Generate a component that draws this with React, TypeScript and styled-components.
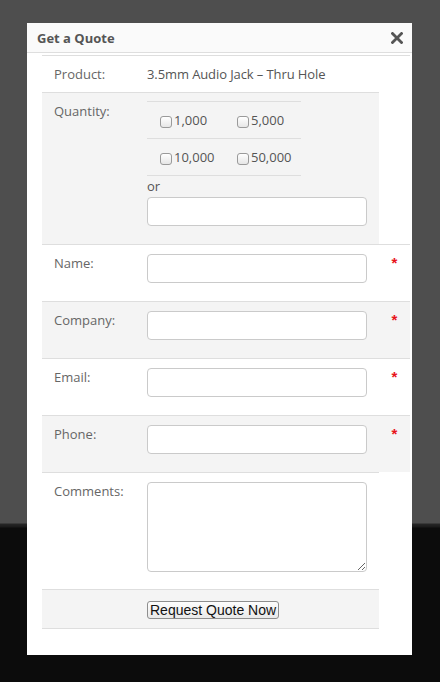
import React from "react";
import styled, { createGlobalStyle } from "styled-components";

const Global = createGlobalStyle`
  html, body { margin: 0; padding: 0; }
  body { font-family: "Open Sans", "Noto Sans", sans-serif; }
`;

const Backdrop = styled.div`
  width: 440px;
  height: 682px;
  overflow: hidden;
  background: linear-gradient(
    to bottom,
    #4e4e4e 0px,
    #4e4e4e 523px,
    #262626 524px,
    #1a1a1a 527px,
    #0c0c0c 528px,
    #0c0c0c 100%
  );
  padding-top: 23px;
  box-sizing: border-box;
`;

const Modal = styled.div`
  margin-left: 27px;
  width: 385px;
  height: 632px;
  background: #fff;
  display: flex;
  flex-direction: column;
`;

const Header = styled.div`
  height: 30px;
  box-sizing: border-box;
  background: #fafafa;
  border-bottom: 1px solid #dedede;
  display: flex;
  align-items: center;
  justify-content: space-between;
  padding: 0 9px 0 10px;
`;

const Title = styled.h2`
  margin: 0;
  font-size: 13px;
  font-weight: 700;
  color: #555;
  line-height: 18px;
`;

const Close = styled.button`
  border: 0;
  background: none;
  padding: 0;
  width: 12px;
  height: 12px;
  display: flex;
  cursor: pointer;
`;

const Body = styled.div`
  padding: 2px 0 0 15px;
`;

const Table = styled.div`
  display: flex;
  flex-direction: column;
  border-top: 1px solid #dedede;
  width: 368px;
`;

const Row = styled.div<{ $shade?: boolean; $wide?: boolean; $pb?: number; $first?: boolean }>`
  display: grid;
  grid-template-columns: 105px 232px ${(p) => (p.$wide ? "31px" : "0px")};
  width: ${(p) => (p.$wide ? "368px" : "337px")};
  background: ${(p) => (p.$shade ? "#f4f4f4" : "#fff")};
  border-top: ${(p) => (p.$first ? "none" : "1px solid #dedede")};
  padding-bottom: ${(p) => p.$pb ?? 0}px;
  box-sizing: border-box;
`;

const Label = styled.div<{ $pt?: number }>`
  padding: ${(p) => p.$pt ?? 9}px 0 0 12px;
  font-size: 13px;
  line-height: 18px;
  color: #666;
`;

const Field = styled.div<{ $pt?: number }>`
  padding-top: ${(p) => p.$pt ?? 9}px;
  font-size: 13px;
  line-height: 18px;
  color: #555;
`;

const Value = styled.div`
  padding: 9px 0;
  font-size: 13px;
  line-height: 18px;
  color: #555;
  letter-spacing: -0.1px;
`;

const Star = styled.div`
  padding-top: 12px;
  text-align: center;
  color: #e8141b;
  font-family: "Liberation Sans", Arial, sans-serif;
  font-weight: 700;
  font-size: 15px;
  line-height: 12px;
`;

const Input = styled.input`
  display: block;
  width: 220px;
  height: 29px;
  box-sizing: border-box;
  border: 1px solid #cacaca;
  border-radius: 4px;
  background: #fff;
  margin: 0;
`;

const TextArea = styled.textarea`
  display: block;
  width: 220px;
  height: 90px;
  box-sizing: border-box;
  border: 1px solid #cacaca;
  border-radius: 4px;
  background: #fff;
  margin: 0;
  resize: both;
`;

const Choices = styled.div`
  width: 154px;
  display: grid;
  grid-template-columns: 77px 77px;
  border-top: 1px solid #dedede;
`;

const Choice = styled.label`
  display: flex;
  align-items: center;
  height: 36px;
  padding-left: 13px;
  border-bottom: 1px solid #dedede;
  font-size: 13px;
  color: #555;
  gap: 2px;
`;

const Box = styled.input`
  appearance: none;
  -webkit-appearance: none;
  width: 12px;
  height: 12px;
  margin: 4px 0 0 0;
  border: 1px solid #9a9a9a;
  border-radius: 3px;
  background: linear-gradient(#fff, #e6e6e6);
  box-sizing: border-box;
`;

const Or = styled.div`
  font-size: 13px;
  line-height: 18px;
  color: #555;
  margin: 1px 0 2px;
`;

const Submit = styled.button`
  font-family: "Liberation Sans", Arial, sans-serif;
  font-size: 14px;
  line-height: 16px;
  height: 18px;
  padding: 0 2px;
  color: #111;
  border: 1px solid #8e8e8e;
  border-radius: 3px;
  background: linear-gradient(#fdfdfd, #e9e9e9);
  cursor: pointer;
`;

const ButtonRow = styled(Row)`
  border-bottom: 1px solid #dedede;
`;

const CloseIcon = () => (
  <svg width="12" height="12" viewBox="0 0 12 12">
    <path d="M1.5 1.5 L10.5 10.5 M10.5 1.5 L1.5 10.5" stroke="#555" strokeWidth="2.8" strokeLinecap="square" />
  </svg>
);

const required = ["Name:", "Company:", "Email:", "Phone:"];

export default function App() {
  return (
    <>
      <Global />
      <Backdrop>
        <Modal>
          <Header>
            <Title>Get a Quote</Title>
            <Close aria-label="Close">
              <CloseIcon />
            </Close>
          </Header>
          <Body>
            <Table>
              <Row $first>
                <Label>Product:</Label>
                <Value>3.5mm Audio Jack – Thru Hole</Value>
                <div />
              </Row>
              <Row $shade $pb={18}>
                <Label $pt={9}>Quantity:</Label>
                <Field $pt={8}>
                  <Choices>
                    {["1,000", "5,000", "10,000", "50,000"].map((q) => (
                      <Choice key={q}>
                        <Box type="checkbox" />
                        {q}
                      </Choice>
                    ))}
                  </Choices>
                  <Or>or</Or>
                  <Input type="text" />
                </Field>
                <div />
              </Row>
              {required.map((l, i) => (
                <Row key={l} $wide $shade={i % 2 === 1} $pb={18}>
                  <Label>{l}</Label>
                  <Field>
                    <Input type="text" />
                  </Field>
                  <Star>*</Star>
                </Row>
              ))}
              <Row $pb={17}>
                <Label>Comments:</Label>
                <Field>
                  <TextArea />
                </Field>
                <div />
              </Row>
              <ButtonRow $shade $pb={9}>
                <div />
                <Field $pt={11}>
                  <Submit type="button">Request Quote Now</Submit>
                </Field>
                <div />
              </ButtonRow>
            </Table>
          </Body>
        </Modal>
      </Backdrop>
    </>
  );
}
